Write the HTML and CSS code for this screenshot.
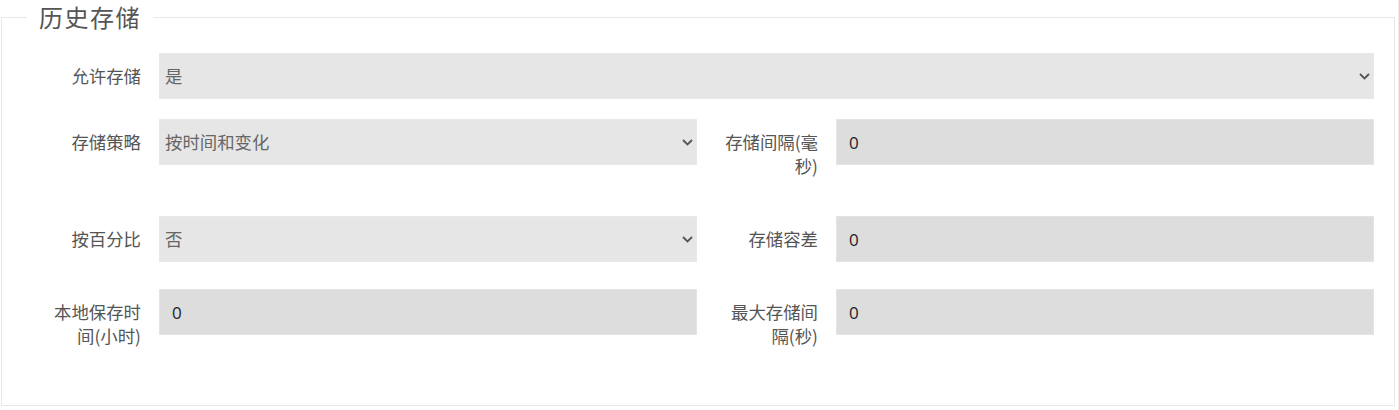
FILE: index.html
```html
<!DOCTYPE html>
<html lang="zh-CN">
<head>
<meta charset="utf-8">
<title>历史存储</title>
<link rel="stylesheet" href="styles.css">
</head>
<body>
<div class="page">
  <fieldset class="panel">
    <legend class="panel-title">历史存储</legend>
    <div class="form">
      <div class="row row-first">
        <label class="label">允许存储</label>
        <div class="select-wrap span-3">
          <select class="select"><option>是</option><option>否</option></select>
          <svg class="chev" width="11" height="7" viewBox="0 0 11 7"><path d="M1 1l4.5 4.5L10 1" fill="none" stroke="#555" stroke-width="1.8"/></svg>
        </div>
      </div>
      <div class="row">
        <label class="label">存储策略</label>
        <div class="select-wrap">
          <select class="select"><option>按时间和变化</option></select>
          <svg class="chev" width="11" height="7" viewBox="0 0 11 7"><path d="M1 1l4.5 4.5L10 1" fill="none" stroke="#555" stroke-width="1.8"/></svg>
        </div>
        <label class="label">存储间隔(毫秒)</label>
        <input class="input" type="text" value="0">
      </div>
      <div class="row">
        <label class="label">按百分比</label>
        <div class="select-wrap">
          <select class="select"><option>否</option><option>是</option></select>
          <svg class="chev" width="11" height="7" viewBox="0 0 11 7"><path d="M1 1l4.5 4.5L10 1" fill="none" stroke="#555" stroke-width="1.8"/></svg>
        </div>
        <label class="label">存储容差</label>
        <input class="input" type="text" value="0">
      </div>
      <div class="row">
        <label class="label">本地保存时间(小时)</label>
        <input class="input" type="text" value="0">
        <label class="label">最大存储间隔(秒)</label>
        <input class="input" type="text" value="0">
      </div>
    </div>
  </fieldset>
</div>
</body>
</html>
```

FILE: styles.css
```css
html, body {
  margin: 0;
  padding: 0;
  background: #ffffff;
}

body {
  font-family: "Open Sans", "Noto Sans CJK SC", sans-serif;
  color: #555;
}

.page {
  width: 1399px;
  height: 410px;
  box-sizing: border-box;
  border-right: 1px solid #eeeeee;
  padding: 0 3px 0 1px;
}

.panel {
  margin: 0;
  padding: 0;
  border: 1px solid #e8e8e8;
  height: 406px;
  box-sizing: border-box;
  min-width: 0;
}

.panel-title {
  margin-left: 25px;
  padding: 0 12px;
  font-family: "Noto Sans CJK SC", sans-serif;
  font-size: 24px;
  line-height: 34px;
  color: #555;
  letter-spacing: 1.5px;
}

.form {
  padding: 19px 20px 0 17px;
}

.row {
  display: grid;
  grid-template-columns: 140px 1fr 139px 1fr;
  align-items: start;
  margin-bottom: 27px;
}

.row-first {
  margin-bottom: 20px;
}

.label {
  box-sizing: border-box;
  padding: 11px 18px 11px 24px;
  text-align: right;
  font-size: 17.4px;
  line-height: 24px;
  color: #555;
  font-family: "Noto Sans CJK SC", sans-serif;
}

.select-wrap {
  position: relative;
  height: 46px;
}

.span-3 {
  grid-column: 2 / 5;
}

.select {
  -webkit-appearance: none;
  appearance: none;
  display: block;
  width: 100%;
  height: 46px;
  box-sizing: border-box;
  margin: 0;
  border: 1px solid #e9e9e9;
  border-radius: 0;
  background: #e6e6e6;
  padding: 0 30px 0 5px;
  font-family: "Open Sans", "Noto Sans CJK SC", sans-serif;
  font-size: 17.4px;
  color: #666;
  outline: none;
}

.chev {
  position: absolute;
  right: 4px;
  top: 20px;
}

.input {
  display: block;
  width: 100%;
  height: 46px;
  box-sizing: border-box;
  margin: 0;
  border: 1px solid #e4e4e4;
  border-radius: 0;
  background: #dddddd;
  padding: 0 12px;
  font-family: "Open Sans", "Noto Sans CJK SC", sans-serif;
  font-size: 17px;
  color: #222;
  outline: none;
}
```
